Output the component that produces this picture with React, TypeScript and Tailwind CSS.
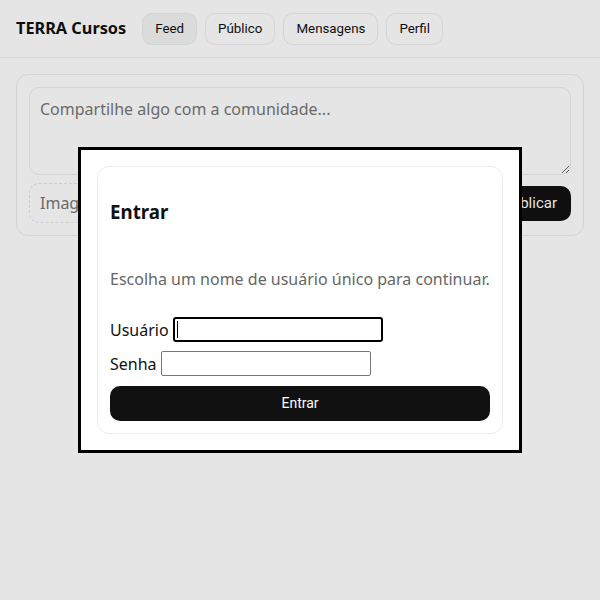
import React from "react";

export default function App() {
  return (
    <div className="relative min-h-[600px] bg-white font-['Noto_Sans',sans-serif] text-[#111]">
      <header className="flex h-[58px] items-center gap-4 border-b border-[#ececec] px-4">
        <div className="text-[16.3px] font-bold leading-none">TERRA Cursos</div>
        <nav className="flex gap-2 font-['Roboto',sans-serif] text-[13.333px]">
          <button className="h-8 rounded-[10px] border border-[#ececec] bg-[#f4f4f4] px-3 text-[#111]">Feed</button>
          <button className="h-8 rounded-[10px] border border-[#ececec] bg-white px-3 text-[#111]">Público</button>
          <button className="h-8 rounded-[10px] border border-[#ececec] bg-white px-3 text-[#111]">Mensagens</button>
          <button className="h-8 rounded-[10px] border border-[#ececec] bg-white px-3 text-[#111]">Perfil</button>
        </nav>
      </header>
      <main className="p-4">
        <div className="flex flex-col gap-2 rounded-xl border border-[#ececec] p-3">
          <textarea
            className="h-[88px] w-full rounded-[10px] border border-[#ececec] px-[10px] py-[9px] font-['Noto_Sans',sans-serif] text-[16px] leading-6 placeholder:text-[#777]"
            placeholder="Compartilhe algo com a comunidade..."
          />
          <div className="flex items-center justify-between">
            <div className="flex h-10 w-[200px] items-center rounded-[10px] border border-dashed border-[#e2e2e2] px-[10px] text-[16px] text-[#777]">
              Imagem
            </div>
            <button className="h-[35px] rounded-[10px] bg-[#111] px-[14px] font-['Roboto',sans-serif] text-[15px] text-white">Publicar</button>
          </div>
        </div>
      </main>

      <div className="fixed inset-0 flex items-center justify-center bg-black/10">
        <div className="w-[444px] border-[3px] border-black bg-white p-4">
          <div className="flex flex-col rounded-xl border border-[#ececec] px-3 pb-3 pt-3">
            <h2 className="mt-[19px] text-[18.72px] font-bold leading-[27px]">Entrar</h2>
            <p className="mt-[42px] text-[16px] leading-6 text-[#666]">Escolha um nome de usuário único para continuar.</p>
            <div className="mt-[26px] flex items-center gap-1 text-[16px]">
              <span>Usuário</span>
              <div className="h-[25px] w-[210px] rounded-[3px] border-2 border-black bg-white pl-[2px]">
                <div className="mt-[2px] h-[17px] w-px bg-black" />
              </div>
            </div>
            <div className="mt-[9px] flex items-center gap-1 text-[16px]">
              <span>Senha</span>
              <div className="h-[25px] w-[210px] rounded-[2px] border border-[#767676] bg-white" />
            </div>
            <button className="mt-[10px] h-[35px] w-full rounded-[10px] bg-[#111] font-['Roboto',sans-serif] text-[14px] text-white">Entrar</button>
          </div>
        </div>
      </div>
    </div>
  );
}
